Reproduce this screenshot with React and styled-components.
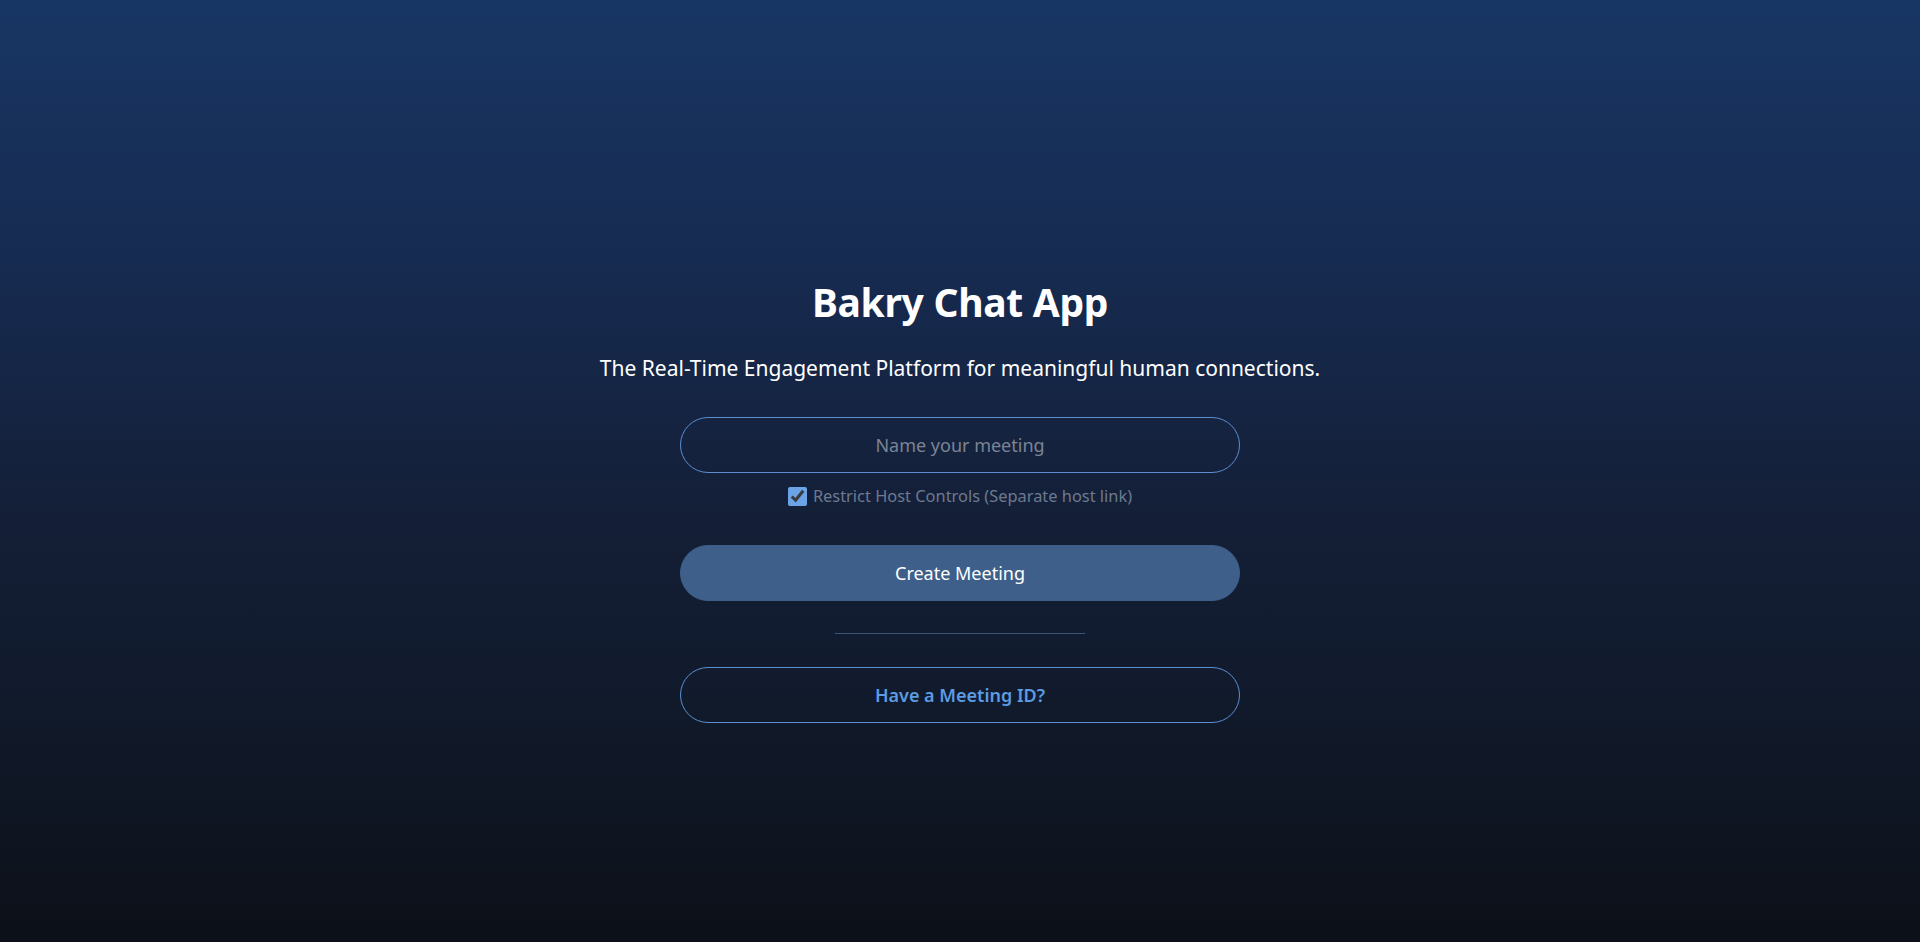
import React, { useState } from 'react'
import styled, { createGlobalStyle } from 'styled-components'

const GlobalStyle = createGlobalStyle`
  html, body {
    margin: 0;
    padding: 0;
    height: 100%;
  }
  body {
    font-family: 'Noto Sans', 'Open Sans', sans-serif;
    background: #0d1119;
  }
  #root {
    min-height: 100%;
  }
`

const Page = () => {
  const [name, setName] = useState('')
  const [restrict, setRestrict] = useState(true)

  return (
    <>
      <GlobalStyle />
      <Screen>
        <Panel>
          <Title>Bakry Chat App</Title>
          <Tagline>The Real-Time Engagement Platform for meaningful human connections.</Tagline>
          <NameInput
            type="text"
            placeholder="Name your meeting"
            value={name}
            onChange={(e) => setName(e.target.value)}
          />
          <CheckRow>
            <CheckBox
              type="checkbox"
              checked={restrict}
              onChange={() => setRestrict(!restrict)}
            />
            Restrict Host Controls (Separate host link)
          </CheckRow>
          <PillButton $variant="solid">Create Meeting</PillButton>
          <Divider />
          <PillButton $variant="outline">Have a Meeting ID?</PillButton>
        </Panel>
      </Screen>
    </>
  )
}

export default Page

const Screen = styled.div`
  min-height: 942px;
  height: 100vh;
  box-sizing: border-box;
  display: flex;
  justify-content: center;
  padding-top: 279px;
  background: linear-gradient(180deg, #183664 0%, #162a4f 30%, #141f37 55%, #111a2b 75%, #0c1018 100%);
`

const Panel = styled.div`
  width: 560px;
  display: flex;
  flex-direction: column;
  align-items: center;
`

const Title = styled.h1`
  margin: 0;
  font-size: 39px;
  line-height: 46px;
  font-weight: 700;
  color: #ffffff;
  letter-spacing: -0.3px;
`

const Tagline = styled.p`
  margin: 29px 0 0;
  font-size: 21px;
  line-height: 28px;
  color: #ffffff;
  white-space: nowrap;
`

const NameInput = styled.input`
  margin-top: 35px;
  width: 100%;
  height: 56px;
  box-sizing: border-box;
  border: 1px solid #5b8fd0;
  border-radius: 28px;
  background: transparent;
  color: #ffffff;
  font-family: inherit;
  font-size: 18px;
  text-align: center;
  outline: none;

  &::placeholder {
    color: #7b8494;
  }
`

const CheckRow = styled.label`
  margin-top: 12px;
  display: flex;
  align-items: center;
  gap: 6px;
  font-size: 16.4px;
  line-height: 22px;
  color: #6c7a8f;
  cursor: pointer;
`

const CheckBox = styled.input`
  margin: 0;
  width: 19px;
  height: 19px;
  accent-color: #6aa3e6;
`

const PillButton = styled.button`
  margin-top: ${(p) => (p.$variant === 'solid' ? '38px' : '0')};
  width: 100%;
  height: 56px;
  border-radius: 28px;
  font-family: inherit;
  font-size: 18px;
  cursor: pointer;
  border: 1px solid ${(p) => (p.$variant === 'solid' ? '#3d5f8a' : '#5b8fd0')};
  background: ${(p) => (p.$variant === 'solid' ? '#3d5f8a' : 'transparent')};
  color: ${(p) => (p.$variant === 'solid' ? '#ffffff' : '#5b9be3')};
  font-weight: ${(p) => (p.$variant === 'solid' ? 400 : 600)};
`

const Divider = styled.hr`
  width: 250px;
  margin: 32px 0 33px;
  border: none;
  border-top: 1px solid #3a5478;
`
